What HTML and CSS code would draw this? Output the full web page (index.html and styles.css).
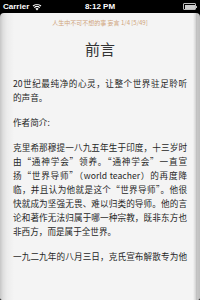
FILE: index.html
```html
<!DOCTYPE html>
<html lang="zh">
<head>
<meta charset="utf-8">
<link rel="stylesheet" href="styles.css">
</head>
<body>
<div class="status">
  <div class="st-left">
    <span class="carrier">Carrier</span>
    <svg class="wifi" width="10" height="8" viewBox="0 0 10 8"><path d="M5 7.6 L3.4 5.8 A2.4 2.4 0 0 1 6.6 5.8 Z" fill="#fff"/><path d="M2.3 4.6 A4 4 0 0 1 7.7 4.6" stroke="#fff" stroke-width="1.1" fill="none"/><path d="M1 3 A6 6 0 0 1 9 3" stroke="#fff" stroke-width="1.1" fill="none"/></svg>
  </div>
  <span class="time">8:12 PM</span>
  <div class="battery"><span class="bat-body"><span class="bat-fill"></span></span><span class="bat-tip"></span></div>
</div>
<div class="page">
  <div class="running">人生中不可不想的事 妄言 1/4 [5/49]</div>
  <h1 class="title">前言</h1>
  <div class="text">
    <p><span class="ln">20世纪最纯净的心灵，让整个世界驻足聆听</span>的声音。</p>
    <p>作者简介:</p>
    <p><span class="ln">克里希那穆提一八九五年生于印度，十三岁时</span><span class="ln">由“通神学会”领养。“通神学会”一直宣</span><span class="ln">扬“世界导师”（world teacher）的再度降</span><span class="ln">临，并且认为他就是这个“世界导师”。他很</span><span class="ln">快就成为坚强无畏、难以归类的导师。他的言</span><span class="ln">论和著作无法归属于哪一种宗教，既非东方也</span>非西方，而是属于全世界。</p>
    <p><span class="ln">一九二九年的八月三日，克氏宣布解散专为他</span></p>
  </div>
</div>
</body>
</html>
```
FILE: styles.css
```css
html, body {
  margin: 0;
  padding: 0;
  background: #000;
  width: 200px;
  height: 300px;
  overflow: hidden;
}
.status {
  height: 13px;
  display: flex;
  align-items: center;
  justify-content: space-between;
  padding: 0 3px;
  color: #fff;
  font-family: "Liberation Sans", Arial, sans-serif;
  font-size: 8px;
  font-weight: bold;
  position: relative;
}
.st-left {
  display: flex;
  align-items: center;
  gap: 3px;
}
.time {
  position: absolute;
  left: 0;
  right: 0;
  text-align: center;
}
.battery {
  display: flex;
  align-items: center;
}
.bat-body {
  width: 10px;
  height: 4px;
  border: 1px solid #bbb;
  border-radius: 1px;
  padding: 0.5px;
  display: flex;
}
.bat-fill {
  flex: 1;
  background: #ccc;
}
.bat-tip {
  width: 1px;
  height: 2px;
  background: #bbb;
}
.page {
  height: 287px;
  border-radius: 4px 4px 2px 2px;
  background:
    linear-gradient(to right, rgba(0,0,0,0) 0, rgba(0,0,0,0.14) 3px, rgba(0,0,0,0.28) 4px, rgba(0,0,0,0.1) 5px, rgba(0,0,0,0.3) 6px, rgba(0,0,0,0.12) 7px) right top / 7px 100% no-repeat,
    linear-gradient(to right, #c6c6c6 0, #dedede 3px, #ececec 7px, #f4f4f4 14px) left top / 100% 100% no-repeat;
  background-color: #f4f4f4;
  font-family: "Noto Sans CJK SC", "Noto Sans", sans-serif;
  color: #333;
}
.running {
  text-align: center;
  font-size: 6px;
  color: #d0a47c;
  padding-top: 6px;
  line-height: 7px;
}
.title {
  margin: 13px 0 0;
  text-align: center;
  font-size: 15px;
  font-weight: normal;
  line-height: 20px;
  color: #333;
}
.text {
  padding: 17px 13px 0 13px;
  font-size: 8.6px;
  line-height: 14px;
  color: #262626;
}
.text p {
  margin: 0 0 11px;
}
.ln {
  display: block;
  text-align: justify;
  text-align-last: justify;
}
```
